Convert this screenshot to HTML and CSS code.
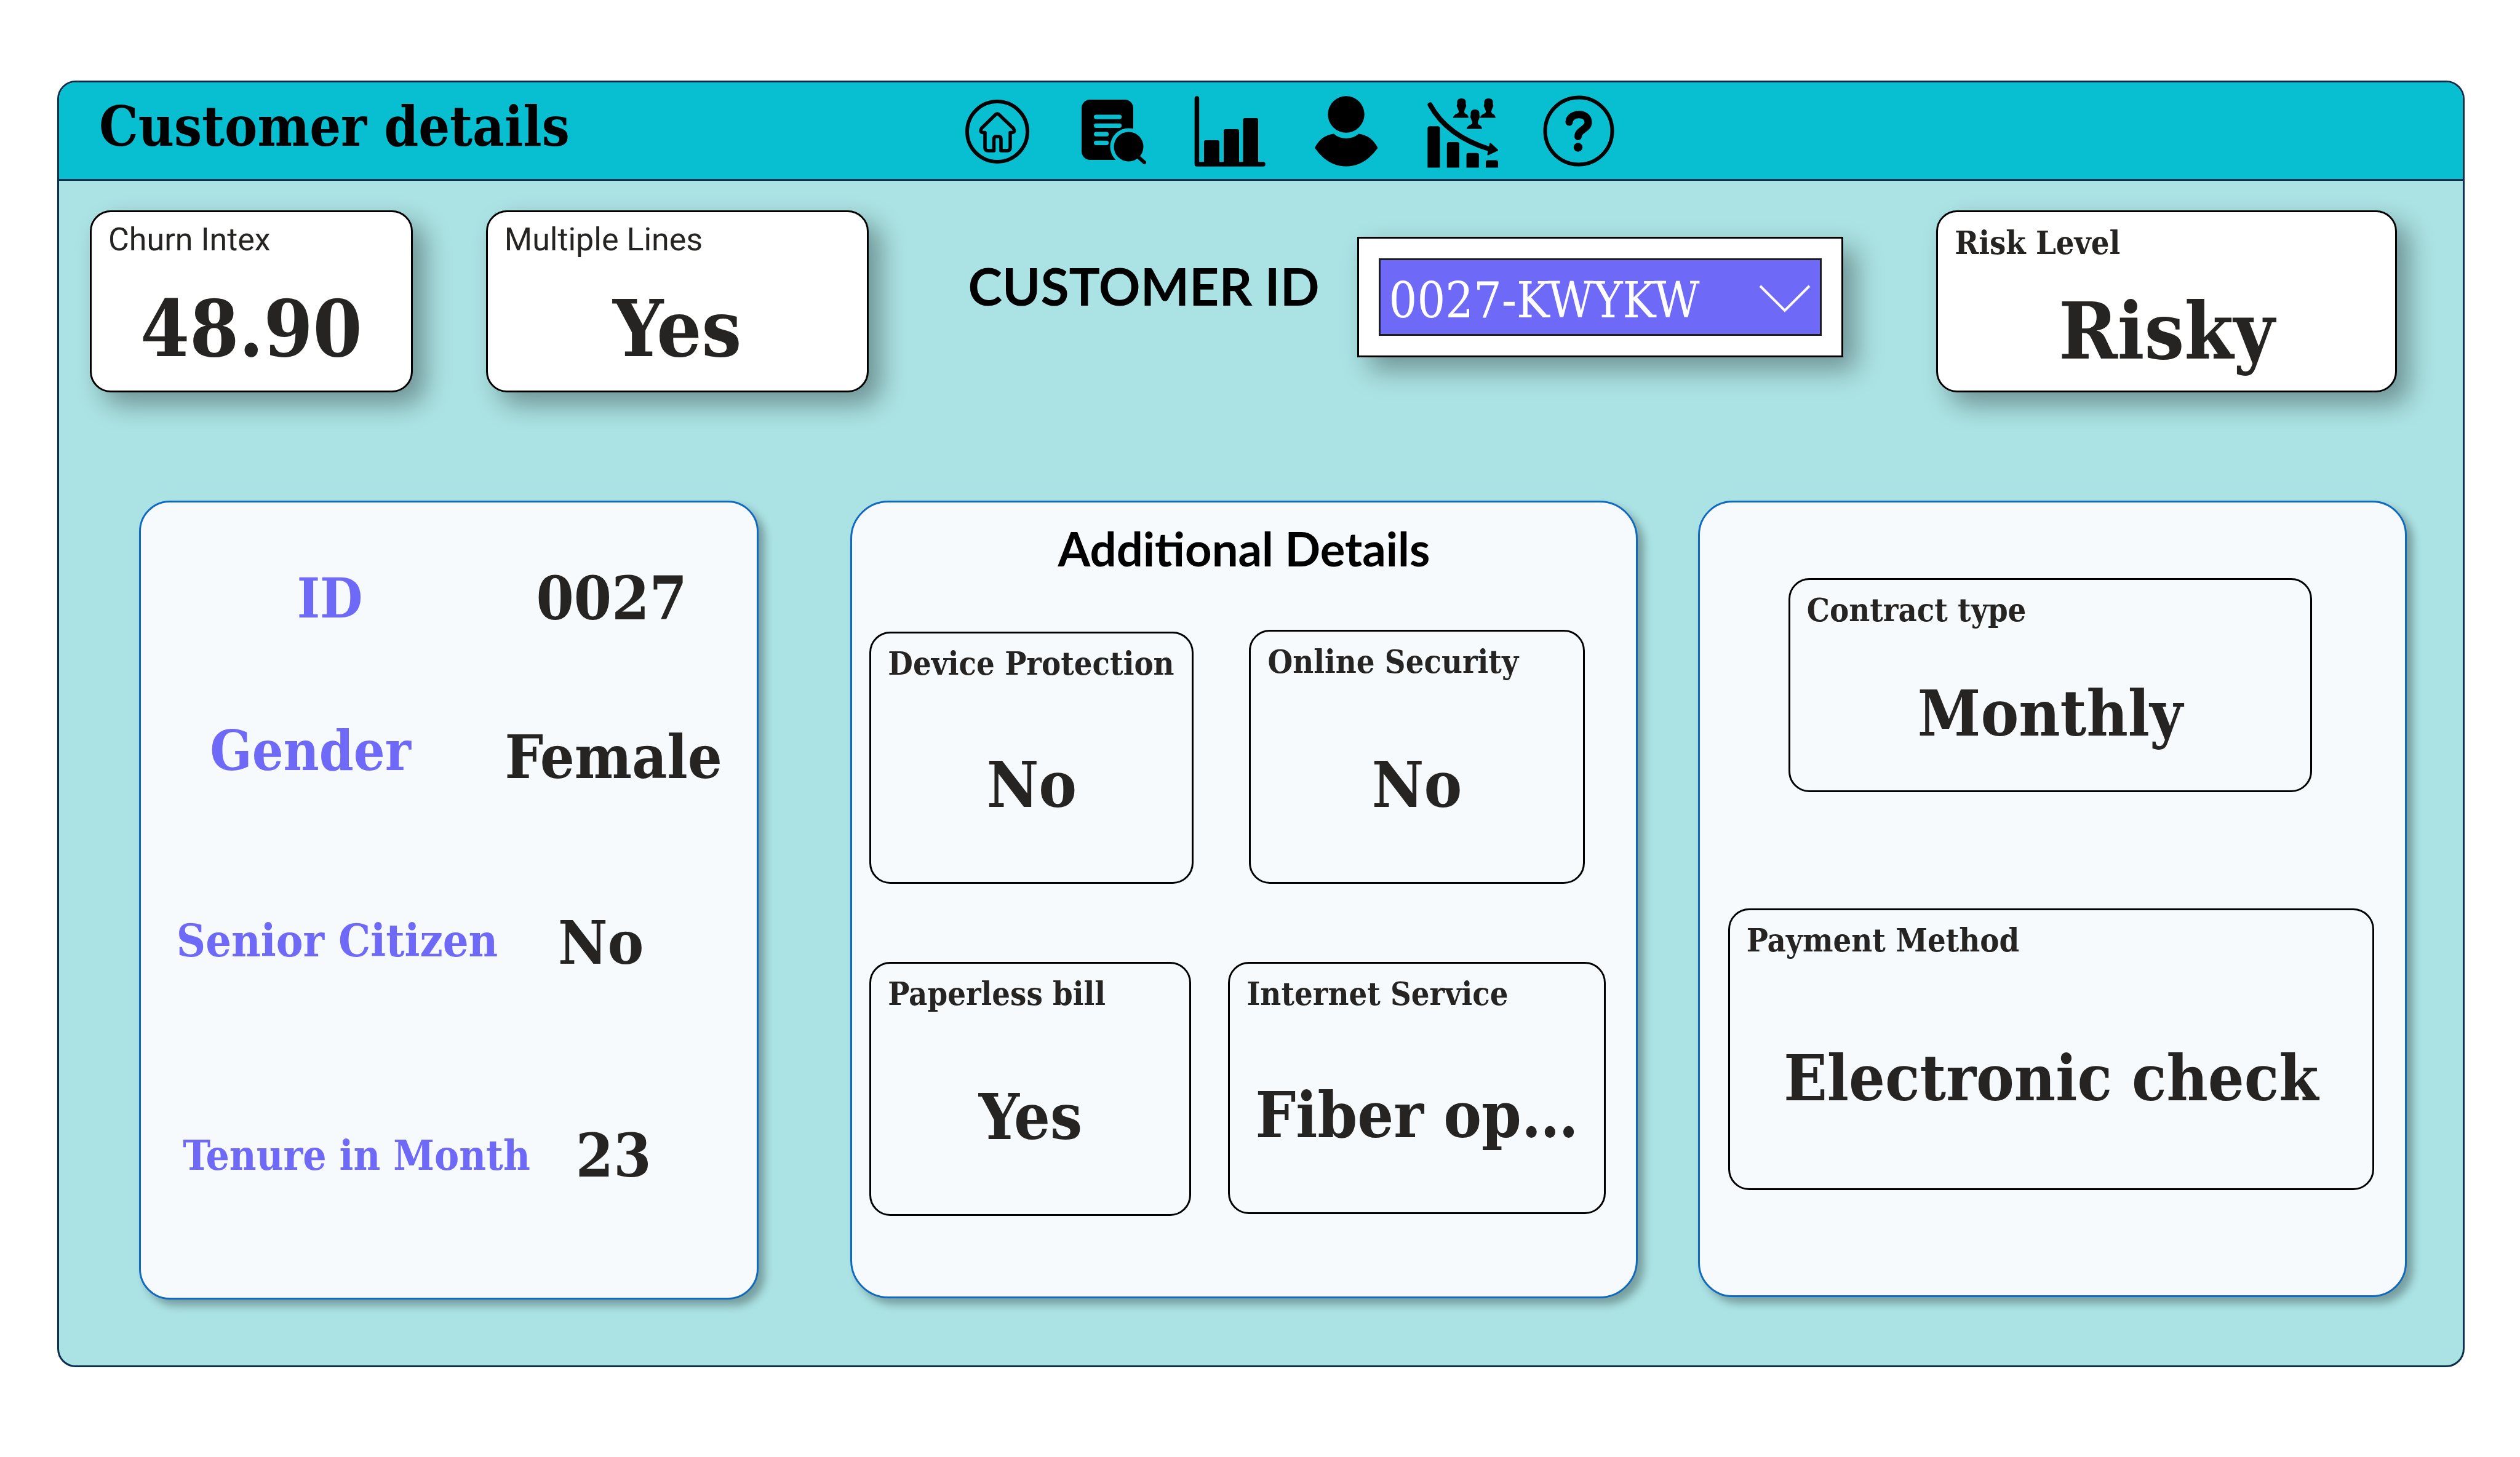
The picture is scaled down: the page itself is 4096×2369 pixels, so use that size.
FILE: index.html
```html
<!DOCTYPE html>
<html lang="en">
<head>
<meta charset="utf-8">
<title>Customer details</title>
<link rel="stylesheet" href="styles.css">
</head>
<body>
<div class="frame">
  <header class="header">
    <h1 class="title">Customer details</h1>
    <nav class="nav" aria-label="Pages">
      <a class="nav-link" href="#home" aria-label="Home">
        <svg class="icon" viewBox="0 0 116 116"><g fill="none" stroke="#000" stroke-linejoin="round"><ellipse cx="58" cy="59" rx="49" ry="49" stroke-width="6"/><path stroke-width="5.5" d="M55.500 31Q58 29 60.500 31L84 53.500Q88 60 82 60.500H79V85Q79 90 74 90H64V71Q64 67 60 67H56.500Q52.500 67 52.500 71V90H43Q38 90 38 85V60.500H35Q29 60 32.500 53.500Z"/></g></svg>
      </a>
      <a class="nav-link" href="#report" aria-label="Report search">
        <svg class="icon" viewBox="0 0 116 116"><rect x="6" y="7" width="84" height="98" rx="14"/><g class="cut-line" stroke-width="7.200" stroke-linecap="round"><path d="M29.500 35.200H67.500M29.500 49.300H67.500M29.500 63.200H46.500M29.500 77.300H46.500"/></g><circle class="cut" cx="82.500" cy="83.500" r="30"/><circle cx="82.500" cy="83.500" r="24"/><path d="M99 101L108 109" stroke="#000" stroke-width="6" stroke-linecap="round"/></svg>
      </a>
      <a class="nav-link" href="#charts" aria-label="Charts">
        <svg class="icon" viewBox="0 0 116 116"><path d="M4.400 5V112H112" fill="none" stroke="#000" stroke-width="7.500" stroke-linecap="round" stroke-linejoin="round"/><path d="M16 110V76Q16 73 19 73H38Q41 73 41 76V110ZM48 110V58Q48 55 51 55H70Q73 55 73 58V110ZM79.500 110V40Q79.500 37 82.500 37H101Q104 37 104 40V110Z"/></svg>
      </a>
      <a class="nav-link" href="#customer" aria-label="Customer" aria-current="page">
        <svg class="icon" viewBox="0 0 116 116"><circle cx="58" cy="31" r="29.700"/><path d="M7 85.500Q17 65 38 62.500Q46 70 58 70Q70 70 78.500 62.500Q99 65 109.500 85.500Q88 115.500 58 115.500Q28 115.500 7 85.500Z"/></svg>
      </a>
      <a class="nav-link" href="#churn" aria-label="Churn">
        <svg class="icon" viewBox="0 0 116 116"><path d="M1.400 117.500V54Q1.400 50.300 5 50.300H18Q21.500 50.300 21.500 54V117.500ZM32.800 117.500V79.500Q32.800 76 36.300 76H49.500Q53 76 53 79.500V117.500ZM64.600 117.500V97Q64.600 93.700 68 93.700H81.500Q84.800 93.700 84.800 97V117.500ZM96 117.500V109Q96 105.600 99.500 105.600H112.500Q116 105.600 116 109V117.500Z"/><path d="M5.500 15.500Q33 66 102 87.500" fill="none" stroke="#000" stroke-width="8" stroke-linecap="round"/><path d="M103.600 79L114.500 89L100 96Z" stroke="#000" stroke-width="3" stroke-linejoin="round"/><path id="person" d="M49.500 12Q49 5 56.500 5Q64 5 63.500 12V14Q65 17 63.500 19L61.500 24Q60 28 63 30Q67 31 68 36.500H42.700Q44 31 51 29Q53 27 51.500 24L49.500 19Q48 17 49.500 14Z"/><use href="#person" x="44"/><use href="#person" x="22" y="18"/></svg>
      </a>
      <a class="nav-link" href="#help" aria-label="Help">
        <svg class="icon" viewBox="0 0 116 116"><g fill="none" stroke="#000"><circle cx="58" cy="58" r="54.500" stroke-width="6"/><path d="M42.500 43.500C43 28 73.500 26 73.500 44C73.500 55 57 56 57 67" stroke-width="12" stroke-linecap="round"/></g><circle cx="57" cy="84.500" r="7.200"/></svg>
      </a>
    </nav>
  </header>

  <main>
    <section class="summary" aria-label="Summary">
      <article class="card card-raised churn">
        <h2 class="card-label label-plain">Churn Intex</h2>
        <p class="card-value">48.90</p>
      </article>
      <article class="card card-raised lines">
        <h2 class="card-label label-plain">Multiple Lines</h2>
        <p class="card-value">Yes</p>
      </article>
      <label class="picker-label" for="customer-id">CUSTOMER ID</label>
      <div class="picker">
        <div class="picker-field">
          <select class="picker-select" id="customer-id">
            <option>0027-KWYKW</option>
          </select>
          <svg class="chevron" viewBox="0 0 84 46" aria-hidden="true"><path d="M2 2L42 42L82 2" fill="none" stroke="#fff" stroke-width="4"/></svg>
        </div>
      </div>
      <article class="card card-raised risk">
        <h2 class="card-label">Risk Level</h2>
        <p class="card-value">Risky</p>
      </article>
    </section>

    <div class="panels">
      <section class="panel profile" aria-label="Profile">
        <dl class="facts">
          <div class="fact fact-id"><dt>ID</dt><dd>0027</dd></div>
          <div class="fact fact-gender"><dt>Gender</dt><dd>Female</dd></div>
          <div class="fact fact-senior"><dt>Senior Citizen</dt><dd>No</dd></div>
          <div class="fact fact-tenure"><dt>Tenure in Month</dt><dd>23</dd></div>
        </dl>
      </section>

      <section class="panel additional">
        <h2 class="panel-title">Additional Details</h2>
        <div class="pair pair-first">
          <article class="card detail">
            <h3 class="card-label">Device Protection</h3>
            <p class="card-value">No</p>
          </article>
          <article class="card detail detail-tall">
            <h3 class="card-label">Online Security</h3>
            <p class="card-value">No</p>
          </article>
        </div>
        <div class="pair pair-second">
          <article class="card detail detail-tall">
            <h3 class="card-label">Paperless bill</h3>
            <p class="card-value">Yes</p>
          </article>
          <article class="card detail">
            <h3 class="card-label">Internet Service</h3>
            <p class="card-value">Fiber op…</p>
          </article>
        </div>
      </section>

      <section class="panel billing" aria-label="Billing">
        <article class="card contract">
          <h3 class="card-label">Contract type</h3>
          <p class="card-value">Monthly</p>
        </article>
        <article class="card payment">
          <h3 class="card-label">Payment Method</h3>
          <p class="card-value">Electronic check</p>
        </article>
      </section>
    </div>
  </main>
</div>
</body>
</html>
```
FILE: styles.css
```css
:root {
  --teal: #08bfd1;
  --mint: #abe2e3;
  --navy: #0c3050;
  --violet: #6f69f8;
  --ink: #252423;
  --serif: "DejaVu Serif Condensed", "DejaVu Serif", serif;
}

* {
  box-sizing: border-box;
}

body {
  margin: 0;
  padding: 131px 90px 149px 93px;
  background: #fff;
  color: var(--ink);
  font-family: var(--serif);
}

h1, h2, h3, p, dl, dt, dd {
  margin: 0;
}

.frame {
  overflow: hidden;
  border: 3px solid var(--navy);
  border-radius: 30px;
  background: var(--mint);
}

/* Header bar */
.header {
  display: grid;
  grid-template-columns: 1467fr 2440fr;
  align-items: center;
  height: 160px;
  border-bottom: 3px solid var(--navy);
  background: var(--teal);
}

.title {
  padding: 0 0 14px 65px;
  color: #000;
  font-size: 89px;
  line-height: 100px;
  font-weight: 700;
  white-space: nowrap;
}

.nav {
  display: flex;
  gap: 73px;
}

.nav-link,
.icon {
  display: block;
  width: 116px;
  height: 116px;
}

.icon {
  overflow: visible;
}

.cut {
  fill: var(--teal);
}

.cut-line {
  stroke: var(--teal);
}

/* Cards */
.card {
  padding-top: 19px;
  border: 3px solid #000;
  border-radius: 34px;
}

.card-label {
  padding-left: 27px;
  font-size: 52px;
  line-height: 60px;
  font-weight: 700;
  white-space: nowrap;
}

.card-value {
  font-size: 103px;
  line-height: 120px;
  font-weight: 700;
  text-align: center;
  white-space: nowrap;
}

.card-raised {
  align-self: stretch;
  padding: 20px 0 22px;
  background: #fff;
  box-shadow: 20px 20px 40px rgba(0, 0, 0, 0.35);
}

.card-raised .card-value {
  padding-top: 38px;
  font-size: 128px;
  line-height: 150px;
}

.card-raised .label-plain {
  font-family: Roboto, sans-serif;
  font-size: 52px;
  line-height: 50px;
  font-weight: 400;
}

.card-raised .label-plain + .card-value {
  padding-top: 44px;
}

/* Summary row */
.summary {
  display: grid;
  grid-template-columns: 525fr 119fr 622fr 162fr 569fr 61fr 791fr 151fr 749fr;
  align-items: start;
  padding: 48px 107px 0 50px;
}

.churn { grid-column: 1; }
.lines { grid-column: 3; }
.risk { grid-column: 9; }

.picker-label {
  grid-column: 5;
  padding-top: 73px;
  color: #000;
  font-family: Lato, sans-serif;
  font-size: 84px;
  line-height: 100px;
  font-weight: 700;
  white-space: nowrap;
}

.picker {
  grid-column: 7;
  margin-top: 43px;
  padding: 32px;
  border: 3px solid #000;
  background: #fff;
  box-shadow: 20px 20px 40px rgba(0, 0, 0, 0.35);
}

.picker-field {
  position: relative;
}

.picker-select {
  display: block;
  width: 100%;
  height: 126px;
  margin: 0;
  padding: 10px 100px 0 14px;
  border: 3px solid #1d1d28;
  border-radius: 0;
  background: var(--violet);
  color: #fff;
  font-family: var(--serif);
  font-size: 80px;
  appearance: none;
}

.chevron {
  position: absolute;
  right: 18px;
  top: 43px;
  width: 84px;
  height: 46px;
  pointer-events: none;
}

/* Panels */
.panels {
  display: grid;
  grid-template-columns: 1007fr 149fr 1279fr 98fr 1152fr;
  align-items: start;
  padding: 176px 91px 107px 130px;
}

.panel {
  border: 3px solid #1169bf;
  background: #f7fafc;
  box-shadow: 10px 10px 14px rgba(0, 0, 0, 0.3);
}

.profile {
  grid-column: 1;
  padding: 96px 0 171px;
  border-radius: 50px;
}

.facts {
  display: grid;
  grid-template-rows: 258px 302px 346px 120px;
}

.fact {
  display: grid;
  align-items: start;
  text-align: center;
  white-space: nowrap;
  font-weight: 700;
}

.fact dt {
  color: var(--violet);
  font-size: 89px;
  line-height: 120px;
}

.fact dd {
  font-size: 98px;
  line-height: 120px;
}

.fact-id { grid-template-columns: 614fr 302fr 85fr; }
.fact-gender { grid-template-columns: 551fr 434fr 16fr; }
.fact-senior { grid-template-columns: 638fr 219fr 144fr; }
.fact-tenure { grid-template-columns: 701fr 134fr 166fr; }

.fact-gender dt { line-height: 100px; }
.fact-senior dt { font-size: 73px; line-height: 112px; }
.fact-tenure dt { font-size: 67px; }

.additional {
  grid-column: 3;
  padding: 39px 0 131px;
  border-radius: 62px;
}

.panel-title {
  color: #000;
  font-family: Lato, sans-serif;
  font-size: 76px;
  line-height: 72px;
  font-weight: 700;
  text-align: center;
}

.pair {
  display: grid;
}

.pair-first {
  grid-template-columns: 527fr 545fr;
  column-gap: 90px;
  align-items: end;
  padding: 96px 83px 0 28px;
}

.pair-second {
  grid-template-columns: 523fr 613fr;
  column-gap: 60px;
  align-items: start;
  padding: 127px 49px 0 28px;
}

.detail {
  padding-bottom: 98px;
}

.detail .card-value {
  padding-top: 107px;
}

.detail-tall .card-value {
  padding-top: 110px;
}

.billing {
  grid-column: 5;
  display: grid;
  row-gap: 189px;
  padding: 123px 50px 171px 46px;
  border-radius: 56px;
}

.contract {
  margin: 0 101px 0 98px;
  padding-bottom: 65px;
}

.contract .card-value {
  padding-top: 78px;
}

.payment {
  padding-bottom: 119px;
}

.payment .card-value {
  padding-top: 134px;
}
```
